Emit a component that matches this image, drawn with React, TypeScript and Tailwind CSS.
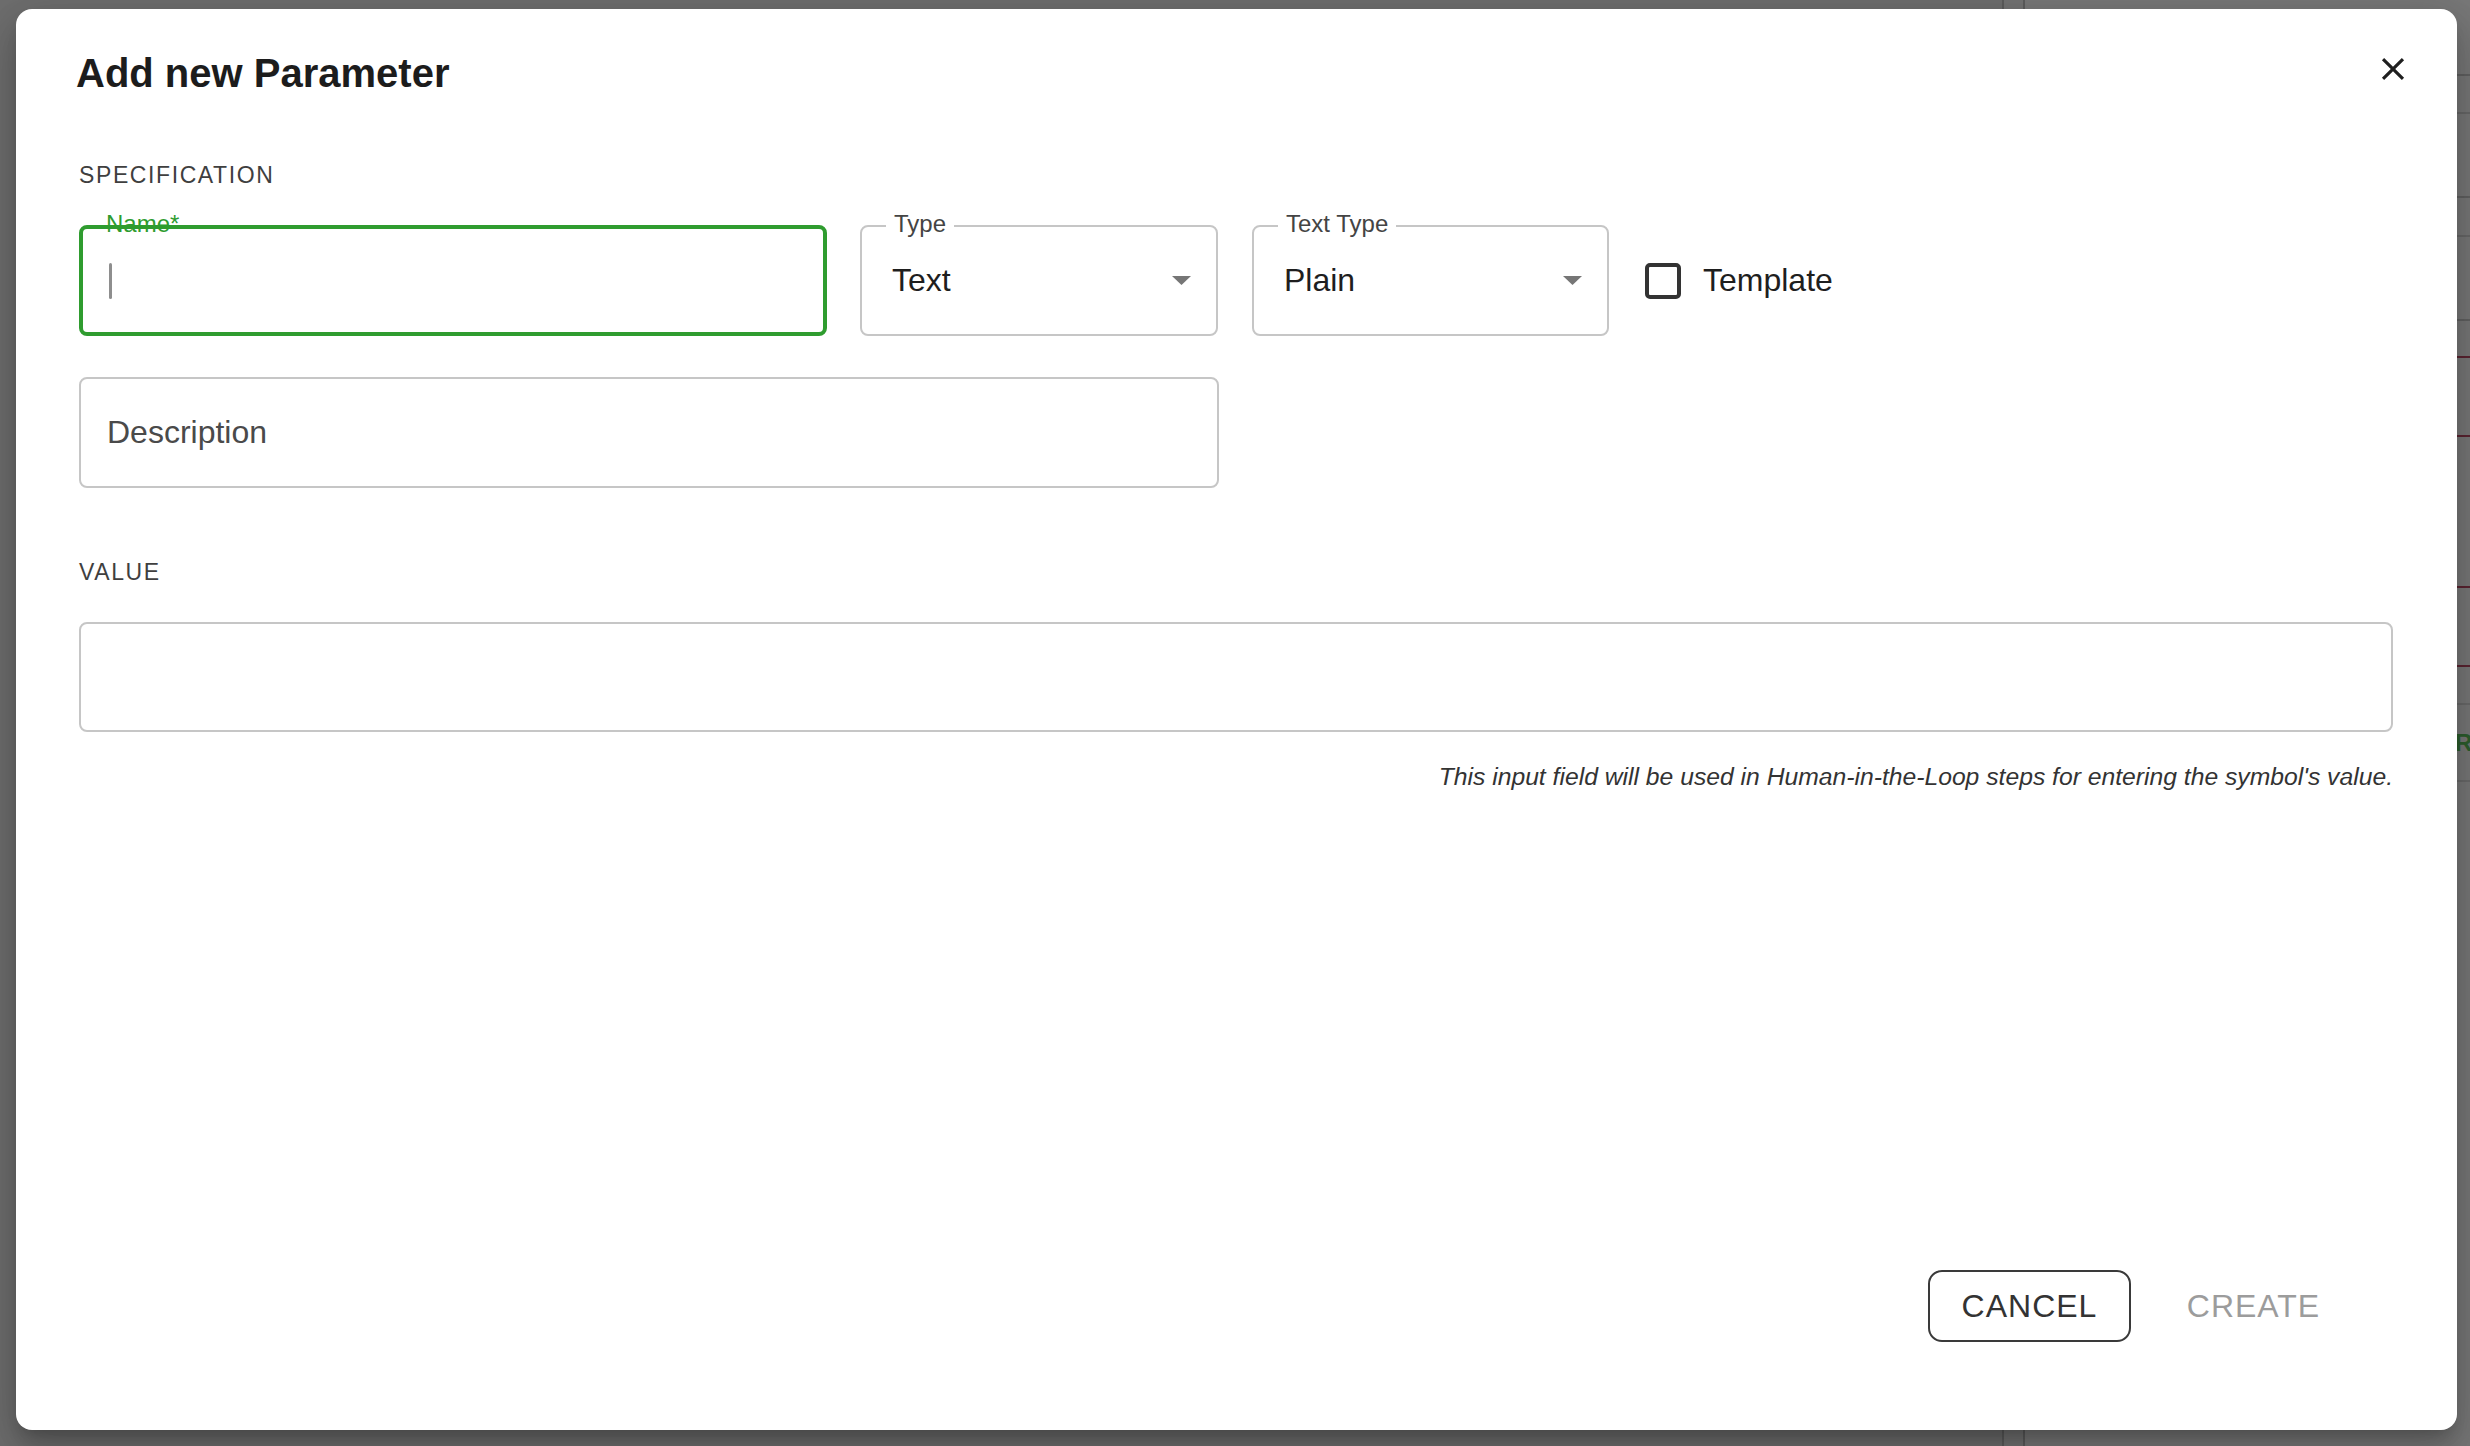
import React from "react";

const font = { fontFamily: '"Liberation Sans", Arial, Helvetica, sans-serif' };

function Arrow() {
  return (
    <svg width="19" height="9" viewBox="0 0 19 9" className="shrink-0">
      <polygon points="0,0 19,0 9.5,9" fill="#767676" />
    </svg>
  );
}

function SelectField({ label, value, width }: { label: string; value: string; width: string }) {
  return (
    <div className={`relative h-[111px] ${width}`}>
      <div className="flex h-full w-full items-center justify-between rounded-[8px] border-2 border-[#c6c6c6] pl-[30px] pr-[25px]">
        <span className="text-[32px] leading-[37px] text-[#1e1e1e]">{value}</span>
        <Arrow />
      </div>
      <span className="absolute left-[26px] top-[-15px] bg-white px-[8px] text-[24px] leading-[28px] text-[#444]">
        {label}
      </span>
    </div>
  );
}

export default function App() {
  const rowLines = [
    { h: "h-[76px]", c: "border-[#616161]" },
    { h: "h-[38px]", c: "border-[#686868]" },
    { h: "h-[84px]", c: "border-[#616161]" },
    { h: "h-[39px]", c: "border-[#686868]" },
    { h: "h-[84px]", c: "border-[#616161]" },
    { h: "h-[37px]", c: "border-[#5b2431]" },
    { h: "h-[79px]", c: "border-[#5b2431]" },
    { h: "h-[151px]", c: "border-[#5b2431]" },
    { h: "h-[79px]", c: "border-[#5b2431]" },
    { h: "h-[38px]", c: "border-[#6a6a6a]" },
  ];
  return (
    <div className="relative h-[1446px] w-[2470px] overflow-hidden bg-[#727272]" style={font}>
      {/* page behind the overlay */}
      <div className="flex h-full w-full">
        <div className="h-full w-[2002px] shrink-0 bg-[#6e6e6e]" />
        <div className="h-full w-[23px] shrink-0 border-x-2 border-[#5c5c5c] bg-[#737373]" />
        <div className="flex h-full min-w-0 flex-1 flex-col bg-[#787878]">
          {rowLines.map((r, i) => (
            <div key={i} className={`${r.h} shrink-0 border-b-2 ${r.c}`} />
          ))}
          <div className="flex h-[77px] shrink-0 items-center border-b-2 border-[#6a6a6a] pl-[430px]">
            <span className="whitespace-nowrap text-[24px] font-bold text-[#2d5e2d]">RAW</span>
          </div>
          <div className="flex-1" />
        </div>
      </div>

      {/* dialog */}
      <div className="absolute left-[16px] top-[9px] flex h-[1421px] w-[2441px] flex-col rounded-[16px] bg-white text-[#1e1e1e] shadow-[0_11px_15px_-7px_rgba(0,0,0,0.2),0_24px_38px_3px_rgba(0,0,0,0.14),0_9px_46px_8px_rgba(0,0,0,0.12)]">
        <div className="flex items-start justify-between pl-[60px] pr-[45px] pt-[40px]">
          <h1 className="text-[40px] font-bold leading-[48px] text-[#1c1c1c]">Add new Parameter</h1>
          <button className="mt-[1px] flex h-[38px] w-[38px] items-center justify-center">
            <svg width="38" height="38" viewBox="0 0 24 24">
              <path
                d="M19 6.41 17.59 5 12 10.59 6.41 5 5 6.41 10.59 12 5 17.59 6.41 19 12 13.41 17.59 19 19 17.59 13.41 12z"
                fill="#1f1f1f"
              />
            </svg>
          </button>
        </div>

        <div className="flex flex-col pl-[63px] pr-[64px]">
          <div className="mt-[64px] text-[23px] leading-[28px] tracking-[1.6px] text-[#3f3f3f]">SPECIFICATION</div>

          <div className="mt-[36px] flex items-center">
            <div className="relative h-[111px] w-[748px]">
              <div className="flex h-full w-full items-center rounded-[8px] border-[4px] border-[#2f9c2f] pl-[26px]">
                <div className="h-[36px] w-[3px] rounded-full bg-[#8e8e8e]" />
              </div>
              <span className="absolute left-[27px] top-[-15px] text-[24px] leading-[28px] text-[#2f9c2f]">Name*</span>
            </div>
            <div className="ml-[33px]">
              <SelectField label="Type" value="Text" width="w-[358px]" />
            </div>
            <div className="ml-[34px]">
              <SelectField label="Text Type" value="Plain" width="w-[357px]" />
            </div>
            <div className="ml-[36px] h-[36px] w-[36px] rounded-[5px] border-[4px] border-[#333]" />
            <span className="ml-[22px] text-[32px] leading-[37px] text-[#1e1e1e]">Template</span>
          </div>

          <div className="mt-[41px] flex h-[111px] w-[1140px] items-center rounded-[8px] border-2 border-[#c6c6c6] pl-[26px]">
            <span className="text-[32px] leading-[37px] text-[#4a4a4a]">Description</span>
          </div>

          <div className="mt-[70px] text-[23px] leading-[28px] tracking-[1.6px] text-[#3f3f3f]">VALUE</div>

          <div className="mt-[36px] h-[110px] w-full rounded-[8px] border-2 border-[#c6c6c6]" />

          <div className="mt-[30px] text-right text-[24.7px] italic leading-[30px] text-[#333]">
            This input field will be used in Human-in-the-Loop steps for entering the symbol's value.
          </div>
        </div>

        <div className="mt-auto flex justify-end gap-[24px] pb-[88px] pr-[105px]">
          <button className="flex h-[72px] w-[203px] items-center justify-center rounded-[14px] border-2 border-[#3a3a3a] text-[32px] tracking-[1px] text-[#333]">
            CANCEL
          </button>
          <button className="flex h-[72px] w-[197px] items-center justify-center rounded-[14px] text-[32px] tracking-[1px] text-[#9c9c9c]">
            CREATE
          </button>
        </div>
      </div>
    </div>
  );
}
